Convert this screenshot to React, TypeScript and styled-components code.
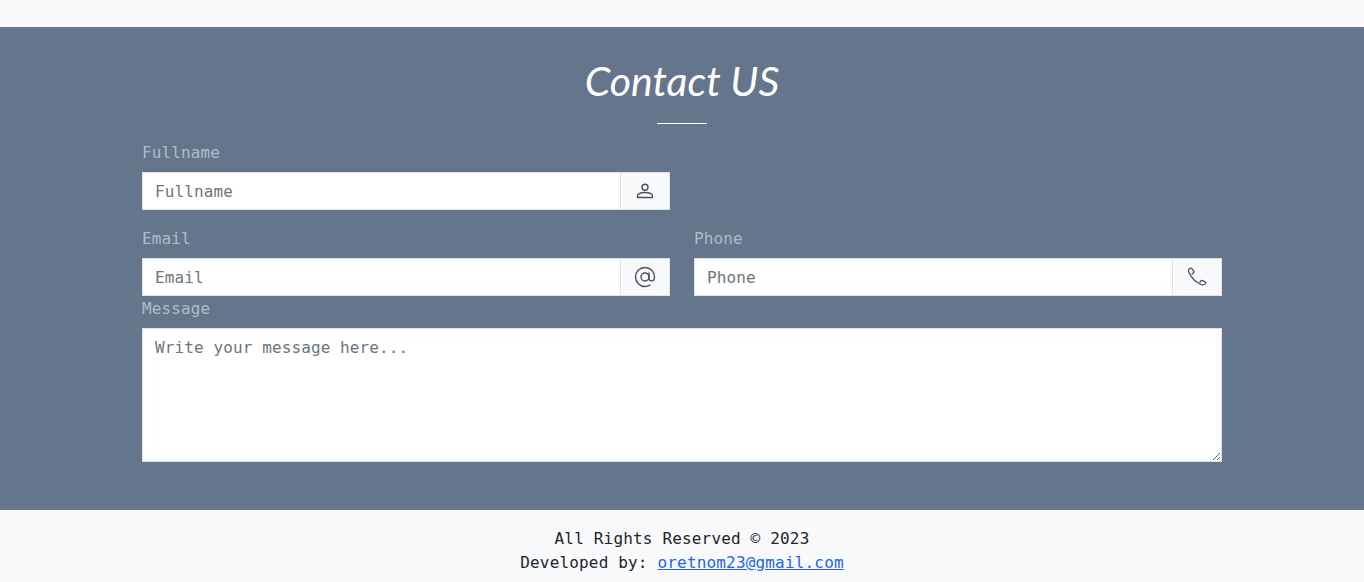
import React from "react";
import styled, { createGlobalStyle } from "styled-components";

const mono = `"DejaVu Sans Mono", "Liberation Mono", monospace`;

const Global = createGlobalStyle`
  html, body { margin: 0; padding: 0; background: #fafafa; }
  * { box-sizing: border-box; }
  body { font-family: ${mono}; font-size: 16px; line-height: 24px; }
`;

const Page = styled.div`
  display: flex;
  flex-direction: column;
  padding-top: 27px;
  height: 582px;
  overflow: hidden;
`;

const Section = styled.section`
  background: #65758b;
  padding: 29px 142px 48px;
  height: 483px;
`;

const Title = styled.h1`
  margin: 0;
  color: #fff;
  font-family: "Lato", "Liberation Sans", sans-serif;
  font-style: italic;
  font-weight: 400;
  font-size: 41px;
  line-height: 50px;
  text-align: center;
`;

const Divider = styled.div`
  width: 50px;
  height: 1px;
  background: #fff;
  margin: 17px auto 16px;
`;

const Grid = styled.div`
  display: grid;
  grid-template-columns: 528px 528px;
  column-gap: 24px;
`;

const Field = styled.div<{ $full?: boolean; $bottom?: number }>`
  grid-column: ${(p) => (p.$full ? "1 / -1" : "auto")};
  margin-bottom: ${(p) => p.$bottom ?? 0}px;
`;

const Label = styled.label`
  display: block;
  color: #cbd5e1;
  opacity: 0.72;
  font-size: 16px;
  line-height: 24px;
  letter-spacing: 0.11px;
  padding-top: 1px;
  margin-bottom: 7px;
`;

const InputRow = styled.div`
  display: flex;
  height: 38px;
  border: 1px solid #dee2e6;
  background: #fff;
`;

const Input = styled.input`
  flex: 1;
  min-width: 0;
  border: 0;
  outline: 0;
  padding: 0 12px;
  background: #fff;
  color: #475569;
  font-family: ${mono};
  font-size: 16px;
  letter-spacing: 0.11px;
  &::placeholder { color: #6c757d; opacity: 1; }
`;

const Addon = styled.span`
  width: 49px;
  display: flex;
  align-items: center;
  justify-content: center;
  background: #f8f9fa;
  border-left: 1px solid #dee2e6;
  color: #495057;
`;

const TextArea = styled.textarea`
  display: block;
  width: 100%;
  height: 134px;
  padding: 7px 12px;
  border: 1px solid #dee2e6;
  outline: 0;
  background: #fff;
  color: #475569;
  font-family: ${mono};
  font-size: 16px;
  line-height: 24px;
  letter-spacing: 0.11px;
  &::placeholder { color: #6c757d; opacity: 1; }
`;

const Footer = styled.footer`
  flex: 1;
  background: #f8f9fa;
  padding-top: 17px;
  text-align: center;
  color: #212529;
  font-size: 16px;
  line-height: 24px;
  letter-spacing: 0.17px;
`;

const Line = styled.div``;

const Mail = styled.a`
  color: #2563eb;
  text-decoration: underline;
`;

const UserIcon = () => (
  <svg width="20" height="20" viewBox="0 0 20 20" fill="none" stroke="currentColor" strokeWidth="1.4">
    <circle cx="10" cy="6.300" r="3" />
    <path d="M2.500 16.500v-1.200c0-2.600 3.500-3.800 7.500-3.800s7.500 1.200 7.500 3.800v1.200z" strokeLinejoin="round" />
  </svg>
);

const AtIcon = () => (
  <svg width="22" height="22" viewBox="0 0 22 22" fill="none" stroke="currentColor" strokeWidth="1.4" strokeLinecap="round">
    <circle cx="11" cy="11" r="4" />
    <path d="M15 7v5.200c0 1.700 1.100 2.600 2.500 2.600s3-1.300 3-3.800C20.500 5.800 16.300 1.500 11 1.500S1.500 5.800 1.500 11 5.800 20.500 11 20.500c2 0 3.600-.5 5-1.500" />
  </svg>
);

const PhoneIcon = () => (
  <svg width="20" height="20" viewBox="0 0 20 20" fill="none" stroke="currentColor" strokeWidth="1.3" strokeLinejoin="round" strokeLinecap="round">
    <path d="M5.200 7 6.800 5.600C7.200 5.200 7.200 4.700 6.900 4.300L4.900 1.700C4.300 1 3.400 .9 2.700 1.500L1.900 2.300C1.300 3 1.300 3.900 1.700 4.800 3.900 10 7.900 14.600 13 17c1.500.8 2.900 1 4 .5l1.300-.8c.7-.5.7-1.300 0-1.700l-2.700-1.400c-.6-.3-1.200-.3-1.600.1L13 15" />
  </svg>
);

export default function App() {
  return (
    <>
      <Global />
      <Page>
        <Section>
          <Title>Contact US</Title>
          <Divider />
          <Grid>
            <Field $bottom={16}>
              <Label>Fullname</Label>
              <InputRow>
                <Input placeholder="Fullname" />
                <Addon><UserIcon /></Addon>
              </InputRow>
            </Field>
            <div />
            <Field>
              <Label>Email</Label>
              <InputRow>
                <Input placeholder="Email" />
                <Addon><AtIcon /></Addon>
              </InputRow>
            </Field>
            <Field>
              <Label>Phone</Label>
              <InputRow>
                <Input placeholder="Phone" />
                <Addon><PhoneIcon /></Addon>
              </InputRow>
            </Field>
            <Field $full>
              <Label>Message</Label>
              <TextArea placeholder="Write your message here..." />
            </Field>
          </Grid>
        </Section>
        <Footer>
          <Line>All Rights Reserved © 2023</Line>
          <Line>Developed by: <Mail href="#">oretnom23@gmail.com</Mail></Line>
        </Footer>
      </Page>
    </>
  );
}
